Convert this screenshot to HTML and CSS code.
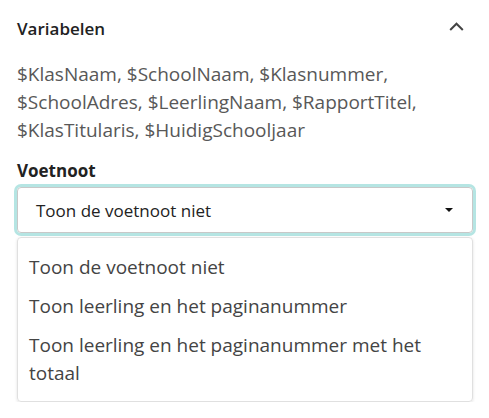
FILE: index.html
```html
<!DOCTYPE html>
<html lang="nl">
<head>
<meta charset="utf-8">
<link rel="stylesheet" href="styles.css">
</head>
<body>
<div class="panel">
  <div class="header">
    <span class="title">Variabelen</span>
    <svg class="chevron" width="15" height="9" viewBox="0 0 15 9"><path d="M1.2 8 L7.5 1.7 L13.8 8" fill="none" stroke="#444" stroke-width="2"/></svg>
  </div>
  <p class="vars">$KlasNaam, $SchoolNaam, $Klasnummer, $SchoolAdres, $LeerlingNaam, $RapportTitel, $KlasTitularis, $HuidigSchooljaar</p>
  <div class="label">Voetnoot</div>
  <div class="select">
    <span class="select-text">Toon de voetnoot niet</span>
    <svg class="caret" width="8" height="4" viewBox="0 0 8 4"><path d="M0 0 H8 L4 4 Z" fill="#111"/></svg>
  </div>
  <ul class="menu">
    <li class="option">Toon de voetnoot niet</li>
    <li class="option">Toon leerling en het paginanummer</li>
    <li class="option">Toon leerling en het paginanummer met het totaal</li>
  </ul>
</div>
</body>
</html>
```
FILE: styles.css
```css
html, body {
  margin: 0;
  padding: 0;
  background: #fff;
}
body {
  font-family: "Open Sans", "Liberation Sans", sans-serif;
  color: #333;
}
.panel {
  padding: 17px 16px 0 17px;
}
.header {
  display: flex;
  align-items: center;
  justify-content: space-between;
  height: 24px;
}
.title {
  font-size: 17px;
  font-weight: 600;
  line-height: 24px;
  color: #222;
}
.chevron {
  display: block;
  margin-right: 9px;
  margin-top: -6px;
}
.vars {
  margin: 19px 0 0 0;
  font-size: 19px;
  line-height: 28px;
  color: #585858;
}
.label {
  margin-top: 16px;
  font-size: 17px;
  font-weight: 700;
  line-height: 22px;
  color: #222;
}
.select {
  margin-top: 5px;
  height: 44px;
  border: 1px solid #c8c8c8;
  border-radius: 4px;
  box-shadow: 0 0 0 3px #b5e5e3;
  display: flex;
  align-items: center;
  justify-content: space-between;
  padding: 0 19px 0 18px;
}
.select-text {
  font-size: 17px;
  color: #222;
  line-height: 22px;
  margin-top: 1px;
}
.caret {
  display: block;
}
.menu {
  list-style: none;
  margin: 4px 0 0 0;
  padding: 9px 0 9px 0;
  border: 1px solid #e0e0e0;
  border-radius: 4px;
  box-shadow: 0 1px 3px rgba(0,0,0,0.12);
}
.option {
  padding: 6px 20px 5px 11px;
  font-size: 19px;
  line-height: 28px;
  color: #444;
}
```
